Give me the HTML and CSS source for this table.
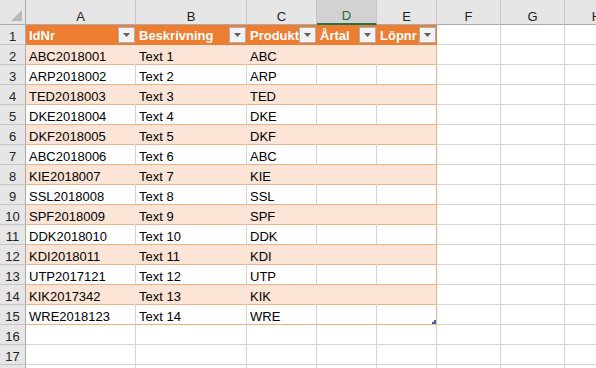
FILE: index.html
```html
<!DOCTYPE html>
<html>
<head>
<meta charset="utf-8">
<link rel="stylesheet" href="styles.css">
</head>
<body>
<div class="sheet">
  <div class="corner"><svg width="11" height="11" viewBox="0 0 11 11"><polygon points="11,0 11,11 0,11" fill="#b9b9b9"/></svg></div>
  <div class="col">A</div><div class="col">B</div><div class="col">C</div><div class="col sel">D</div><div class="col">E</div><div class="col">F</div><div class="col">G</div><div class="col">H</div>

  <div class="rh">1</div>
  <div class="th"><span>IdNr</span><span class="dd"><svg width="7" height="4" viewBox="0 0 7 4"><polygon points="0,0 7,0 3.5,4" fill="#5f5f5f"/></svg></span></div>
  <div class="th"><span>Beskrivning</span><span class="dd"><svg width="7" height="4" viewBox="0 0 7 4"><polygon points="0,0 7,0 3.5,4" fill="#5f5f5f"/></svg></span></div>
  <div class="th"><span>Produkt</span><span class="dd"><svg width="7" height="4" viewBox="0 0 7 4"><polygon points="0,0 7,0 3.5,4" fill="#5f5f5f"/></svg></span></div>
  <div class="th"><span>Årtal</span><span class="dd"><svg width="7" height="4" viewBox="0 0 7 4"><polygon points="0,0 7,0 3.5,4" fill="#5f5f5f"/></svg></span></div>
  <div class="th last"><span>Löpnr</span><span class="dd"><svg width="7" height="4" viewBox="0 0 7 4"><polygon points="0,0 7,0 3.5,4" fill="#5f5f5f"/></svg></span></div>
  <div class="c"></div><div class="c"></div><div class="c"></div>

  <div class="rh">2</div><div class="td band">ABC2018001</div><div class="td band">Text 1</div><div class="td band">ABC</div><div class="td band"></div><div class="td band last"></div><div class="c"></div><div class="c"></div><div class="c"></div>
  <div class="rh">3</div><div class="td">ARP2018002</div><div class="td">Text 2</div><div class="td">ARP</div><div class="td"></div><div class="td last"></div><div class="c"></div><div class="c"></div><div class="c"></div>
  <div class="rh">4</div><div class="td band">TED2018003</div><div class="td band">Text 3</div><div class="td band">TED</div><div class="td band"></div><div class="td band last"></div><div class="c"></div><div class="c"></div><div class="c"></div>
  <div class="rh">5</div><div class="td">DKE2018004</div><div class="td">Text 4</div><div class="td">DKE</div><div class="td"></div><div class="td last"></div><div class="c"></div><div class="c"></div><div class="c"></div>
  <div class="rh">6</div><div class="td band">DKF2018005</div><div class="td band">Text 5</div><div class="td band">DKF</div><div class="td band"></div><div class="td band last"></div><div class="c"></div><div class="c"></div><div class="c"></div>
  <div class="rh">7</div><div class="td">ABC2018006</div><div class="td">Text 6</div><div class="td">ABC</div><div class="td"></div><div class="td last"></div><div class="c"></div><div class="c"></div><div class="c"></div>
  <div class="rh">8</div><div class="td band">KIE2018007</div><div class="td band">Text 7</div><div class="td band">KIE</div><div class="td band"></div><div class="td band last"></div><div class="c"></div><div class="c"></div><div class="c"></div>
  <div class="rh">9</div><div class="td">SSL2018008</div><div class="td">Text 8</div><div class="td">SSL</div><div class="td"></div><div class="td last"></div><div class="c"></div><div class="c"></div><div class="c"></div>
  <div class="rh">10</div><div class="td band">SPF2018009</div><div class="td band">Text 9</div><div class="td band">SPF</div><div class="td band"></div><div class="td band last"></div><div class="c"></div><div class="c"></div><div class="c"></div>
  <div class="rh">11</div><div class="td">DDK2018010</div><div class="td">Text 10</div><div class="td">DDK</div><div class="td"></div><div class="td last"></div><div class="c"></div><div class="c"></div><div class="c"></div>
  <div class="rh">12</div><div class="td band">KDI2018011</div><div class="td band">Text 11</div><div class="td band">KDI</div><div class="td band"></div><div class="td band last"></div><div class="c"></div><div class="c"></div><div class="c"></div>
  <div class="rh">13</div><div class="td">UTP2017121</div><div class="td">Text 12</div><div class="td">UTP</div><div class="td"></div><div class="td last"></div><div class="c"></div><div class="c"></div><div class="c"></div>
  <div class="rh">14</div><div class="td band">KIK2017342</div><div class="td band">Text 13</div><div class="td band">KIK</div><div class="td band"></div><div class="td band last"></div><div class="c"></div><div class="c"></div><div class="c"></div>
  <div class="rh">15</div><div class="td">WRE2018123</div><div class="td">Text 14</div><div class="td">WRE</div><div class="td"></div><div class="td last handle"><svg width="4" height="4" viewBox="0 0 4 4"><polygon points="4,0 4,4 0,4 0,2 2,2 2,0" fill="#3f5fb0"/></svg></div><div class="c"></div><div class="c"></div><div class="c"></div>
  <div class="rh">16</div><div class="c"></div><div class="c"></div><div class="c"></div><div class="c"></div><div class="c"></div><div class="c"></div><div class="c"></div><div class="c"></div>
  <div class="rh">17</div><div class="c"></div><div class="c"></div><div class="c"></div><div class="c"></div><div class="c"></div><div class="c"></div><div class="c"></div><div class="c"></div>
  <div class="rh"></div><div class="c"></div><div class="c"></div><div class="c"></div><div class="c"></div><div class="c"></div><div class="c"></div><div class="c"></div><div class="c"></div>
</div>
</body>
</html>
```

FILE: styles.css
```css
html, body {
  margin: 0;
  padding: 0;
  background: #ffffff;
  overflow: hidden;
}

body {
  width: 596px;
  height: 368px;
  font-family: "Liberation Sans", Arial, sans-serif;
  font-size: 13px;
  color: #000000;
}

.sheet {
  display: grid;
  grid-template-columns: 26px 110px 111px 70px 60px 60px 64px 64px 64px;
  grid-template-rows: 25px;
  grid-auto-rows: 20px;
  width: 629px;
}

.sheet > div {
  box-sizing: border-box;
  border-right: 1px solid #d4d4d4;
  border-bottom: 1px solid #d4d4d4;
  display: flex;
  align-items: flex-end;
  line-height: 15px;
  white-space: nowrap;
  overflow: hidden;
}

.corner {
  background: #e6e6e6;
  justify-content: flex-end;
  padding: 0 3px 3px 0;
  border-right-color: #ababab !important;
  border-bottom-color: #ababab !important;
}

.corner svg {
  display: block;
}

.col {
  background: #e6e6e6;
  justify-content: center;
  color: #222222;
  border-right-color: #c6c6c6 !important;
  border-bottom-color: #ababab !important;
}

.col.sel {
  background: #d2d2d2;
  color: #1e6b41;
  border-bottom: 2px solid #217346 !important;
  padding-bottom: 0;
}

.rh {
  background: #e6e6e6;
  justify-content: center;
  color: #222222;
  border-right-color: #ababab !important;
  border-bottom-color: #c6c6c6 !important;
}

.th {
  background: #ed7d31;
  color: #ffffff;
  font-weight: bold;
  justify-content: space-between;
  padding-left: 3px;
  border-right-color: #ed7d31 !important;
  border-bottom-color: #ed7d31 !important;
}

.th span:first-child {
  padding-bottom: 1px;
}

.dd {
  align-self: flex-start;
  margin-top: 2px;
  box-sizing: border-box;
  width: 17px;
  height: 16px;
  background: #f2f2f2;
  border: 1px solid #a9b1b9;
  display: flex;
  align-items: center;
  justify-content: center;
}

.dd svg {
  display: block;
}

.td {
  padding-left: 3px;
  border-bottom-color: #f4b084 !important;
}

.td.band {
  background: #fce4d6;
  border-right-color: #fce4d6;
}

.td.last {
  border-right-color: #f4b084;
}

.handle {
  justify-content: flex-end;
  padding-bottom: 0;
}

.handle svg {
  display: block;
}
```
